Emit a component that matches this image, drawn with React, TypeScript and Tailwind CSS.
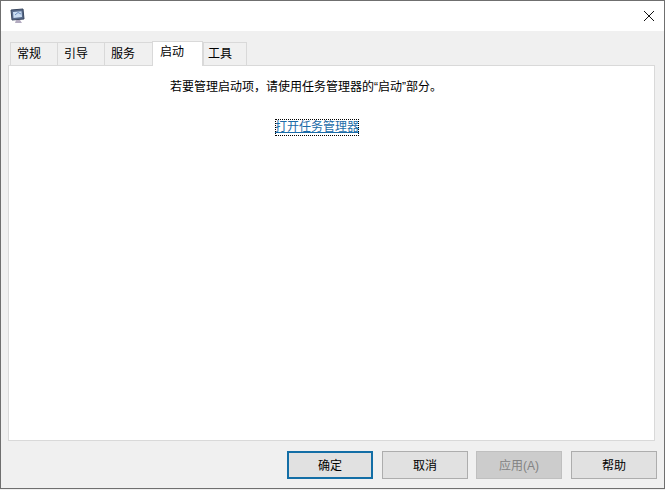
const font = "[font-family:'Liberation_Sans','Noto_Sans_CJK_SC',sans-serif]";

const tabs = [
  { label: "常规", width: "w-[48px]" },
  { label: "引导", width: "w-[48px]" },
  { label: "服务", width: "w-[49px]" },
  { label: "启动", width: "w-[51px]", active: true },
  { label: "工具", width: "w-[44px]", last: true },
];

function AppIcon() {
  return (
    <svg width="16" height="16" viewBox="0 0 16 16">
      <path d="M1 2 L13 1 L14 11 L2 12 Z" fill="#56698a" stroke="#39475f" />
      <path d="M3 4 L11.5 3.2 L12 9 L3.5 10 Z" fill="#c9dcf2" />
      <path d="M5 7 L8 4.5 L11 6" fill="none" stroke="#6f8fbf" />
      <path d="M6 12 H10 L12 15 H5 Z" fill="#b3abc0" />
    </svg>
  );
}

function DialogButton({
  label,
  primary,
  disabled,
  className = "",
}: {
  label: string;
  primary?: boolean;
  disabled?: boolean;
  className?: string;
}) {
  let cls = "border border-[#adadad] bg-[#e1e1e1] text-black";
  if (primary) cls = "border-2 border-[#136ea6] bg-[#e1e1e1] text-black";
  if (disabled) cls = "border border-[#bfbfbf] bg-[#cccccc] text-[#838383]";
  return (
    <div className={`flex h-[28px] w-[86px] items-center justify-center pt-[1px] text-[12px] ${cls} ${className}`}>
      {label}
    </div>
  );
}

export default function App() {
  return (
    <div
      className={`flex h-[490px] w-[665px] flex-col overflow-hidden bg-[#f0f0f0] pb-[1px] ${font}`}
    >
      <div className="flex h-[489px] flex-col border border-[#6f6f6f]">
        {/* title bar */}
        <div className="flex h-[30px] items-center justify-between bg-white pl-[9px] pr-[9px]">
          <AppIcon />
          <svg width="12" height="12" viewBox="0 0 12 12">
            <path d="M1 1 L11 11 M11 1 L1 11" stroke="#111" strokeWidth="1" fill="none" />
          </svg>
        </div>

        <div className="flex flex-1 flex-col px-[7px] pt-[9px]">
          {/* tabs */}
          <div className="relative z-10 flex h-[25px] items-end pl-[2px]">
            {tabs.map((tab) =>
              tab.active ? (
                <div
                  key={tab.label}
                  className={`-mb-[1px] flex h-[25px] ${tab.width} items-start border border-b-0 border-[#d9d9d9] bg-white pl-[7px] pt-[1px] text-[12px] text-black`}
                >
                  {tab.label}
                </div>
              ) : (
                <div
                  key={tab.label}
                  className={`-mr-[1px] flex h-[23px] ${tab.width} items-start border border-b-0 border-[#d9d9d9] bg-[#f0f0f0] ${tab.last ? "pl-[4px]" : "pl-[6px]"} pt-[2px] text-[12px] text-black`}
                >
                  {tab.label}
                </div>
              ),
            )}
          </div>

          {/* panel */}
          <div className="flex h-[376px] w-[647px] flex-col items-start border border-[#d9d9d9] bg-white pt-[11px]">
            <p className="ml-[161px] h-[20px] text-[12px] leading-[21px] text-black">
              若要管理启动项，请使用任务管理器的“启动”部分。
            </p>
            <a className="ml-[266px] mt-[22px] text-[12px] leading-[17px] text-[#1b6ca8] underline outline-1 -outline-offset-1 outline-black outline-dotted">
              打开任务管理器
            </a>
          </div>

          {/* footer buttons */}
          <div className="mt-[10px] flex w-[649px] justify-end gap-[9px]">
            <DialogButton label="确定" primary />
            <DialogButton label="取消" />
            <DialogButton label="应用(A)" disabled className="-ml-[1px]" />
            <DialogButton label="帮助" />
          </div>
        </div>
      </div>
    </div>
  );
}
